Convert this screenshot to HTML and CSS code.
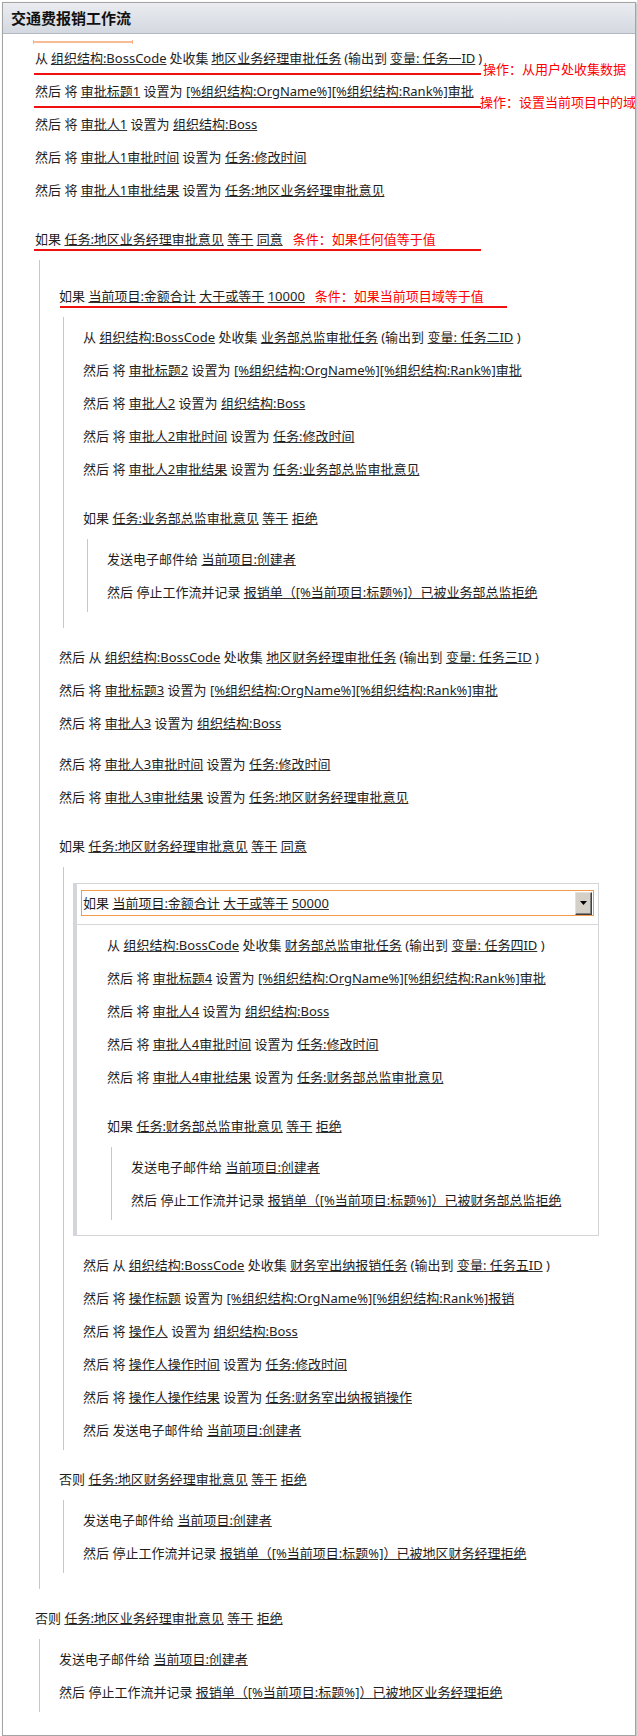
FILE: index.html
```html
<!DOCTYPE html>
<html lang="zh-CN">
<head>
<meta charset="utf-8">
<title>交通费报销工作流</title>
<link rel="stylesheet" href="styles.css">
</head>
<body>
<div class="panel">
  <div class="title">交通费报销工作流</div>
  <div class="body">
    <div class="marker"></div>

    <div class="ln tight">从 <span class="v">组织结构:BossCode</span> 处收集 <span class="v">地区业务经理审批任务</span> (输出到 <span class="v">变量: 任务一ID</span> )<span class="rl low"></span><span class="na">操作：从用户处收集数据</span></div>
    <div class="ln">然后 将 <span class="v">审批标题1</span> 设置为 <span class="v">[%组织结构:OrgName%][%组织结构:Rank%]审批</span><span class="rl low"></span><span class="na na2">操作：设置当前项目中的域</span></div>
    <div class="ln">然后 将 <span class="v">审批人1</span> 设置为 <span class="v">组织结构:Boss</span></div>
    <div class="ln">然后 将 <span class="v">审批人1审批时间</span> 设置为 <span class="v">任务:修改时间</span></div>
    <div class="ln">然后 将 <span class="v">审批人1审批结果</span> 设置为 <span class="v">任务:地区业务经理审批意见</span></div>

    <div class="ln if">如果 <span class="v">任务:地区业务经理审批意见</span> <span class="v">等于</span> <span class="v">同意</span><span class="note">条件：如果任何值等于值</span><span class="rl"></span></div>
    <div class="blk">
      <div class="ln if">如果 <span class="v">当前项目:金额合计</span> <span class="v">大于或等于</span> <span class="v">10000</span><span class="note">条件：如果当前项目域等于值</span><span class="rl rl1"></span></div>
      <div class="blk">
        <div class="ln">从 <span class="v">组织结构:BossCode</span> 处收集 <span class="v">业务部总监审批任务</span> (输出到 <span class="v">变量: 任务二ID</span> )</div>
        <div class="ln">然后 将 <span class="v">审批标题2</span> 设置为 <span class="v">[%组织结构:OrgName%][%组织结构:Rank%]审批</span></div>
        <div class="ln">然后 将 <span class="v">审批人2</span> 设置为 <span class="v">组织结构:Boss</span></div>
        <div class="ln">然后 将 <span class="v">审批人2审批时间</span> 设置为 <span class="v">任务:修改时间</span></div>
        <div class="ln">然后 将 <span class="v">审批人2审批结果</span> 设置为 <span class="v">任务:业务部总监审批意见</span></div>
        <div class="ln if">如果 <span class="v">任务:业务部总监审批意见</span> <span class="v">等于</span> <span class="v">拒绝</span></div>
        <div class="blk">
          <div class="ln">发送电子邮件给 <span class="v">当前项目:创建者</span></div>
          <div class="ln">然后 停止工作流并记录 <span class="v">报销单（[%当前项目:标题%]）已被业务部总监拒绝</span></div>
        </div>
      </div>

      <div class="ln">然后 从 <span class="v">组织结构:BossCode</span> 处收集 <span class="v">地区财务经理审批任务</span> (输出到 <span class="v">变量: 任务三ID</span> )</div>
      <div class="ln">然后 将 <span class="v">审批标题3</span> 设置为 <span class="v">[%组织结构:OrgName%][%组织结构:Rank%]审批</span></div>
      <div class="ln">然后 将 <span class="v">审批人3</span> 设置为 <span class="v">组织结构:Boss</span></div>
      <div class="ln gap">然后 将 <span class="v">审批人3审批时间</span> 设置为 <span class="v">任务:修改时间</span></div>
      <div class="ln">然后 将 <span class="v">审批人3审批结果</span> 设置为 <span class="v">任务:地区财务经理审批意见</span></div>

      <div class="ln if">如果 <span class="v">任务:地区财务经理审批意见</span> <span class="v">等于</span> <span class="v">同意</span></div>
      <div class="blk">
        <div class="sel">
          <div class="sel-head">
            <span class="sel-text">如果 <span class="v">当前项目:金额合计</span> <span class="v">大于或等于</span> <span class="v">50000</span></span>
            <span class="dd"><svg width="7" height="4" viewBox="0 0 7 4"><polygon points="0,0 7,0 3.5,4" fill="#000"/></svg></span>
          </div>
          <div class="sel-sep"></div>
          <div class="sel-body">
            <div class="ln">从 <span class="v">组织结构:BossCode</span> 处收集 <span class="v">财务部总监审批任务</span> (输出到 <span class="v">变量: 任务四ID</span> )</div>
            <div class="ln">然后 将 <span class="v">审批标题4</span> 设置为 <span class="v">[%组织结构:OrgName%][%组织结构:Rank%]审批</span></div>
            <div class="ln">然后 将 <span class="v">审批人4</span> 设置为 <span class="v">组织结构:Boss</span></div>
            <div class="ln">然后 将 <span class="v">审批人4审批时间</span> 设置为 <span class="v">任务:修改时间</span></div>
            <div class="ln">然后 将 <span class="v">审批人4审批结果</span> 设置为 <span class="v">任务:财务部总监审批意见</span></div>
            <div class="ln if">如果 <span class="v">任务:财务部总监审批意见</span> <span class="v">等于</span> <span class="v">拒绝</span></div>
            <div class="blk">
              <div class="ln">发送电子邮件给 <span class="v">当前项目:创建者</span></div>
              <div class="ln">然后 停止工作流并记录 <span class="v">报销单（[%当前项目:标题%]）已被财务部总监拒绝</span></div>
            </div>
          </div>
        </div>
        <div class="ln">然后 从 <span class="v">组织结构:BossCode</span> 处收集 <span class="v">财务室出纳报销任务</span> (输出到 <span class="v">变量: 任务五ID</span> )</div>
        <div class="ln">然后 将 <span class="v">操作标题</span> 设置为 <span class="v">[%组织结构:OrgName%][%组织结构:Rank%]报销</span></div>
        <div class="ln">然后 将 <span class="v">操作人</span> 设置为 <span class="v">组织结构:Boss</span></div>
        <div class="ln">然后 将 <span class="v">操作人操作时间</span> 设置为 <span class="v">任务:修改时间</span></div>
        <div class="ln">然后 将 <span class="v">操作人操作结果</span> 设置为 <span class="v">任务:财务室出纳报销操作</span></div>
        <div class="ln">然后 发送电子邮件给 <span class="v">当前项目:创建者</span></div>
      </div>
      <div class="ln">否则 <span class="v">任务:地区财务经理审批意见</span> <span class="v">等于</span> <span class="v">拒绝</span></div>
      <div class="blk">
        <div class="ln">发送电子邮件给 <span class="v">当前项目:创建者</span></div>
        <div class="ln">然后 停止工作流并记录 <span class="v">报销单（[%当前项目:标题%]）已被地区财务经理拒绝</span></div>
      </div>
    </div>
    <div class="ln">否则 <span class="v">任务:地区业务经理审批意见</span> <span class="v">等于</span> <span class="v">拒绝</span></div>
    <div class="blk">
      <div class="ln">发送电子邮件给 <span class="v">当前项目:创建者</span></div>
      <div class="ln">然后 停止工作流并记录 <span class="v">报销单（[%当前项目:标题%]）已被地区业务经理拒绝</span></div>
    </div>
  </div>
</div>
</body>
</html>
```
FILE: styles.css
```css
* { box-sizing: border-box; }

body {
  margin: 0;
  font-family: "Noto Sans", "Noto Sans CJK SC", sans-serif;
  font-size: 13px;
  color: #1e1e1e;
  background: #fff;
}

.panel {
  margin: 2px 1px 0 2px;
  border: 1px solid #a4a4a4;
  box-shadow: 1px 1px 2px rgba(0, 0, 0, 0.3);
  overflow: hidden;
  background: #fff;
}

.title {
  height: 31px;
  padding: 1px 0 0 8px;
  line-height: 29px;
  font-size: 15px;
  font-weight: bold;
  color: #111;
  background: linear-gradient(#eaecf1, #d4d8e0);
  border-bottom: 1px solid #b5b9c3;
}

.body {
  position: relative;
  padding: 8px 0 10px 32px;
}

.marker {
  position: absolute;
  left: 30px;
  top: 6px;
  width: 100px;
  height: 4px;
  border-left: 1px solid #f6b48a;
  border-right: 1px solid #f6b48a;
}
.marker::before {
  content: "";
  display: block;
  margin-top: 1px;
  height: 2px;
  background: #f8bb94;
}

.ln {
  position: relative;
  height: 33px;
  line-height: 33px;
  white-space: nowrap;
}
.ln.tight { word-spacing: -0.5px; }

.v {
  text-decoration: underline;
  text-decoration-color: #333;
}

.if { margin-top: 16px; }
.gap { margin-top: 8px; }

.blk {
  margin: 4px 0 13px 4px;
  padding: 4px 0 3px 19px;
  border-left: 1px solid #c3c7cf;
}

.note {
  margin-left: 10px;
  color: #f00;
}

.rl {
  position: absolute;
  left: -1px;
  top: 26px;
  width: 447px;
  height: 2px;
  background: #f01010;
}
.rl.low { top: 31px; }
.rl.rl1 { left: 1px; }

.na {
  position: absolute;
  left: 448px;
  top: 19px;
  line-height: 16px;
  color: #f00;
  word-spacing: 0;
}
.na.na2 { left: 445px; }

.sel {
  margin: 12px 36px 13px -10px;
  border: 1px solid #d3d5d9;
  border-left: 4px solid #d3d6db;
}

.sel-head {
  display: flex;
  align-items: center;
  height: 26px;
  margin: 6px 4px 0 4px;
  padding-left: 1px;
  border: 1px solid #f39a4c;
  white-space: nowrap;
}

.sel-text { line-height: 20px; }

.dd {
  display: flex;
  align-items: center;
  justify-content: center;
  margin-left: auto;
  margin-right: 1px;
  width: 17px;
  height: 23px;
  background: #d4d0c8;
  border: 1px solid;
  border-color: #e4e1da #404040 #404040 #e4e1da;
  box-shadow: inset -1px -1px 0 #808080;
}

.sel-sep {
  margin-top: 8px;
  border-top: 1px solid #d6d8dc;
}

.sel-body {
  padding: 4px 0 2px 30px;
}
```
